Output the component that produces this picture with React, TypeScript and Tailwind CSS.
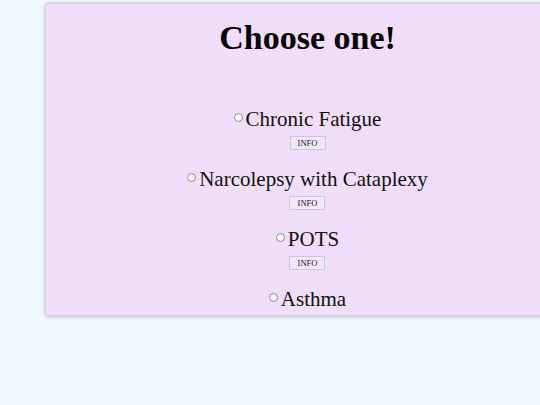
const options = ["Chronic Fatigue", "Narcolepsy with Cataplexy", "POTS", "Asthma"];

const serif = { fontFamily: '"Liberation Serif", "Times New Roman", serif' };

export default function App() {
  return (
    <div className="w-[540px] h-[405px] overflow-hidden bg-[#f0f8ff] pt-[2px]" style={serif}>
      <div className="ml-[44px] w-[527px] h-[315px] overflow-hidden rounded-[5px] border-2 border-[#d6d6e2] bg-[#f0defb] shadow-[0_1px_3px_rgba(0,0,0,0.15)]">
        <h1 className="pt-[14px] text-center text-[34px] font-bold leading-[39px] text-black">Choose one!</h1>
        <div className="mt-[51px] flex flex-col items-center">
          {options.map((opt) => (
            <div key={opt} className="mb-[18px] flex flex-col items-center">
              <label className="flex items-center text-[21px] leading-[23px] text-[#111]">
                <span className="mr-[3px] mt-[-4px] inline-block h-[9px] w-[9px] rounded-full border border-[#8a8a8a] bg-white" />
                {opt}
              </label>
              <button
                className="mt-[5px] flex h-[14px] w-[36px] items-center justify-center border border-[#c5cbe6] bg-[#f3e7fc] text-[8.5px] leading-[12px] text-[#1a1a1a]"
                style={serif}
              >
                INFO
              </button>
            </div>
          ))}
        </div>
      </div>
    </div>
  );
}
